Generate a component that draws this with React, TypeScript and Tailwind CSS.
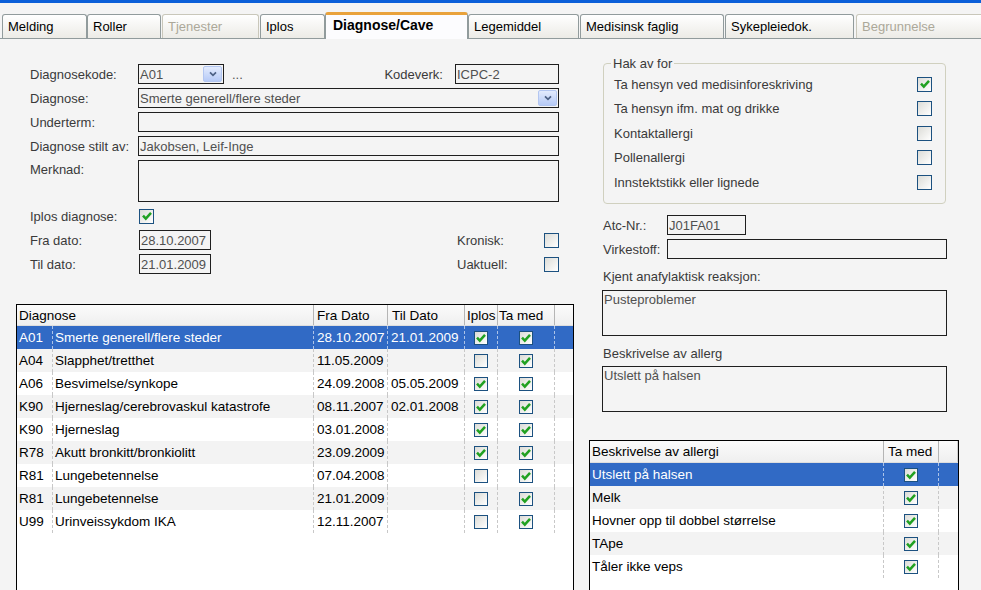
import React from 'react';

type Tab = { label: string; cls: string; active?: boolean; disabled?: boolean };

const tabs: Tab[] = [
  { label: 'Melding', cls: 'ml-[2px] w-[85px]' },
  { label: 'Roller', cls: 'w-[74px]' },
  { label: 'Tjenester', cls: 'ml-[1px] w-[97px]', disabled: true },
  { label: 'Iplos', cls: 'ml-[1px] w-[65px]' },
  { label: 'Diagnose/Cave', cls: 'w-[143px]', active: true },
  { label: 'Legemiddel', cls: 'w-[111px]' },
  { label: 'Medisinsk faglig', cls: 'ml-[1px] w-[144px]' },
  { label: 'Sykepleiedok.', cls: 'ml-[1px] w-[129px]' },
  { label: 'Begrunnelse', cls: 'ml-[2px] w-[140px]', disabled: true },
];

type DiagRow = { code: string; name: string; from: string; to: string; iplos: boolean; med: boolean };

const diagnoses: DiagRow[] = [
  { code: 'A01', name: 'Smerte generell/flere steder', from: '28.10.2007', to: '21.01.2009', iplos: true, med: true },
  { code: 'A04', name: 'Slapphet/tretthet', from: '11.05.2009', to: '', iplos: false, med: true },
  { code: 'A06', name: 'Besvimelse/synkope', from: '24.09.2008', to: '05.05.2009', iplos: true, med: true },
  { code: 'K90', name: 'Hjerneslag/cerebrovaskul katastrofe', from: '08.11.2007', to: '02.01.2008', iplos: true, med: true },
  { code: 'K90', name: 'Hjerneslag', from: '03.01.2008', to: '', iplos: true, med: true },
  { code: 'R78', name: 'Akutt bronkitt/bronkiolitt', from: '23.09.2009', to: '', iplos: true, med: true },
  { code: 'R81', name: 'Lungebetennelse', from: '07.04.2008', to: '', iplos: false, med: true },
  { code: 'R81', name: 'Lungebetennelse', from: '21.01.2009', to: '', iplos: false, med: true },
  { code: 'U99', name: 'Urinveissykdom IKA', from: '12.11.2007', to: '', iplos: false, med: true },
];

const allergies = ['Utslett på halsen', 'Melk', 'Hovner opp til dobbel størrelse', 'TApe', 'Tåler ikke veps'];

const hakAvFor = [
  { label: 'Ta hensyn ved medisinforeskriving', checked: true },
  { label: 'Ta hensyn ifm. mat og drikke', checked: false },
  { label: 'Kontaktallergi', checked: false },
  { label: 'Pollenallergi', checked: false },
  { label: 'Innstektstikk eller lignede', checked: false },
];

const Check = ({ checked, big }: { checked?: boolean; big?: boolean }) => (
  <span
    className={`flex shrink-0 items-center justify-center border border-[#1c5180] bg-linear-to-br from-[#dcdcd7] to-white ${
      big ? 'h-[15px] w-[15px]' : 'h-[14px] w-[14px]'
    }`}
  >
    {checked && (
      <svg viewBox="0 0 12 12" className="h-[12px] w-[12px]">
        <path d="M2 5.6 L4.8 8.6 L10 2.8" fill="none" stroke="#21a121" strokeWidth="2.5" />
      </svg>
    )}
  </span>
);

const DropBtn = () => (
  <span className="flex h-[16px] w-[19px] items-center justify-center rounded-[2px] border border-[#b3c6f1] bg-linear-to-b from-[#e3ebfd] to-[#b6caf6]">
    <svg viewBox="0 0 8 6" className="h-[6px] w-[8px]">
      <path d="M1 1.3 L4 4.3 L7 1.3" fill="none" stroke="#4d6185" strokeWidth="1.7" />
    </svg>
  </span>
);

const Label = ({ children, className = '' }: { children: React.ReactNode; className?: string }) => (
  <span className={`block w-[108px] shrink-0 whitespace-nowrap text-[#3a3a3a] ${className}`}>{children}</span>
);

const Field = ({ className = '', children }: { className?: string; children?: React.ReactNode }) => (
  <div className={`flex shrink-0 overflow-hidden whitespace-nowrap border border-[#1f1f1f] bg-[#f4f4f4] pl-[1px] text-[#505050] ${className}`}>
    {children}
  </div>
);

const DiagnoseTable = () => (
  <div className="ml-[16px] mt-[30px] h-[300px] w-[558px] border border-black bg-white text-[13.5px] text-black">
    <div className="flex h-[21px] border-b border-[#dedede] bg-linear-to-b from-[#fbfbfb] to-[#efefef]">
      <div className="flex w-[297px] items-center border-r border-[#b5b5b5] pl-[2px]">Diagnose</div>
      <div className="flex w-[74px] items-center border-r border-[#b5b5b5] pl-[3px]">Fra Dato</div>
      <div className="flex w-[77px] items-center border-r border-[#b5b5b5] pl-[4px]">Til Dato</div>
      <div className="flex w-[33px] items-center border-r border-[#b5b5b5] pl-[2px]">Iplos</div>
      <div className="flex w-[57px] items-center border-r border-[#b5b5b5] pl-[1px]">Ta med</div>
      <div className="w-[18px]" />
    </div>
    {diagnoses.map((d, i) => {
      const sel = i === 0;
      const line = sel ? 'border-r border-dashed border-white/60' : 'border-r border-dashed border-[#c8c8c8]';
      return (
        <div
          key={i}
          className={`flex h-[23px] ${sel ? 'bg-[#316ac5] text-white' : i % 2 === 1 ? 'bg-[#f3f3f3]' : 'bg-white'}`}
        >
          <div className={`flex w-[36px] items-center pl-[2px] ${line}`}>{d.code}</div>
          <div className={`flex w-[261px] items-center whitespace-nowrap pl-[2px] ${line}`}>{d.name}</div>
          <div className={`flex w-[74px] items-center pl-[3px] ${line}`}>{d.from}</div>
          <div className={`flex w-[77px] items-center pl-[3px] ${line}`}>{d.to}</div>
          <div className={`flex w-[33px] items-center justify-center ${line}`}>
            <Check checked={d.iplos} />
          </div>
          <div className={`flex w-[57px] items-center justify-center ${line}`}>
            <Check checked={d.med} />
          </div>
          <div className="w-[18px]" />
        </div>
      );
    })}
  </div>
);

const AllergyTable = () => (
  <div className="mt-[28px] h-[200px] w-[370px] border border-black bg-white text-[13.5px] text-black">
    <div className="flex h-[22px] border-b border-[#dedede] bg-linear-to-b from-[#fbfbfb] to-[#efefef]">
      <div className="flex w-[294px] items-center border-r border-[#b5b5b5] pl-[2px]">Beskrivelse av allergi</div>
      <div className="flex w-[55px] items-center border-r border-[#b5b5b5] pl-[4px]">Ta med</div>
      <div className="w-[19px] border-r border-[#d0d0d0]" />
    </div>
    {allergies.map((a, i) => {
      const sel = i === 0;
      const line = sel ? 'border-r border-dashed border-white/60' : 'border-r border-dashed border-[#c8c8c8]';
      return (
        <div
          key={i}
          className={`flex h-[23px] ${sel ? 'bg-[#316ac5] text-white' : i % 2 === 1 ? 'bg-[#f3f3f3]' : 'bg-white'}`}
        >
          <div className={`flex w-[294px] items-center whitespace-nowrap pl-[2px] ${line}`}>{a}</div>
          <div className={`flex w-[55px] items-center justify-center ${line}`}>
            <Check checked />
          </div>
          <div className="w-[19px]" />
        </div>
      );
    })}
  </div>
);

export default function App() {
  return (
    <div className="flex h-[590px] w-[981px] flex-col overflow-hidden bg-[#f4f4f4] font-['Liberation_Sans',Arial,sans-serif] text-[13px] leading-[15px]">
      {/* window title bar edge */}
      <div className="h-[3px] w-full shrink-0 bg-[#0b5fd9]" />

      {/* tabs */}
      <div className="flex h-[36px] shrink-0 items-end border-b border-[#919b9c]">
        {tabs.map(t =>
          t.active ? (
            <div
              key={t.label}
              className={`relative -mb-px flex h-[27px] shrink-0 items-center rounded-t-[3px] border border-b-0 border-[#919b9c] border-t-[3px] border-t-[#e9a23b] bg-[#fcfcfe] pb-[3px] pl-[7px] text-[14px] font-bold text-black ${t.cls}`}
            >
              {t.label}
            </div>
          ) : (
            <div
              key={t.label}
              className={`flex h-[24px] shrink-0 items-center rounded-t-[3px] border border-b-0 bg-linear-to-b from-white to-[#ecebe6] pl-[5px] ${
                t.disabled ? 'border-[#c9c7ba] text-[#aca899]' : 'border-[#919b9c] text-black'
              } ${t.cls}`}
            >
              {t.label}
            </div>
          )
        )}
      </div>

      <div className="flex">
        {/* left column */}
        <div className="w-[589px] shrink-0">
          <div className="ml-[30px] w-[529px] pt-[25px]">
            <div className="flex h-[20px] items-center">
              <Label>Diagnosekode:</Label>
              <Field className="h-[20px] w-[86px] items-center justify-between pr-[1px]">
                <span>A01</span>
                <DropBtn />
              </Field>
              <span className="ml-[8px] text-[#555]">...</span>
              <span className="ml-auto mr-[12px] text-[#3a3a3a]">Kodeverk:</span>
              <Field className="h-[20px] w-[104px] items-center">ICPC-2</Field>
            </div>
            <div className="mt-[4px] flex h-[20px] items-center">
              <Label>Diagnose:</Label>
              <Field className="h-[20px] flex-1 items-center justify-between pr-[1px]">
                <span>Smerte generell/flere steder</span>
                <DropBtn />
              </Field>
            </div>
            <div className="mt-[4px] flex h-[20px] items-center">
              <Label>Underterm:</Label>
              <Field className="h-[20px] flex-1" />
            </div>
            <div className="mt-[4px] flex h-[20px] items-center">
              <Label>Diagnose stilt av:</Label>
              <Field className="h-[20px] flex-1 items-center">Jakobsen, Leif-Inge</Field>
            </div>
            <div className="mt-[4px] flex h-[42px] items-start">
              <Label className="pt-[2px]">Merknad:</Label>
              <Field className="h-[42px] flex-1" />
            </div>
            <div className="mt-[4px] flex h-[20px] items-center">
              <Label>Iplos diagnose:</Label>
              <span className="ml-[1px]">
                <Check checked big />
              </span>
            </div>
            <div className="mt-[4px] flex h-[20px] items-center">
              <Label>Fra dato:</Label>
              <Field className="ml-[1px] h-[20px] w-[72px] items-center">28.10.2007</Field>
              <span className="ml-auto w-[87px] text-[#3a3a3a]">Kronisk:</span>
              <Check big />
            </div>
            <div className="mt-[4px] flex h-[20px] items-center">
              <Label>Til dato:</Label>
              <Field className="ml-[1px] h-[20px] w-[72px] items-center">21.01.2009</Field>
              <span className="ml-auto w-[87px] text-[#3a3a3a]">Uaktuell:</span>
              <Check big />
            </div>
          </div>
          <DiagnoseTable />
        </div>

        {/* right column */}
        <div className="w-[392px] shrink-0">
          <fieldset className="ml-[14px] mt-[17px] w-[343px] rounded-[4px] border border-[#d0d0bf]">
            <legend className="ml-[7px] px-[2px] leading-[15px] text-[#3a3a3a]">Hak av for</legend>
            <div className="h-[132px] pl-[10px] pr-[13px] pt-[1px]">
              {hakAvFor.map(h => (
                <div key={h.label} className="flex h-[24.5px] items-center justify-between text-[#3a3a3a]">
                  <span>{h.label}</span>
                  <Check checked={h.checked} big />
                </div>
              ))}
            </div>
          </fieldset>

          <div className="ml-[14px] mt-[11px] flex h-[20px] items-center">
            <span className="w-[64px] shrink-0 text-[#3a3a3a]">Atc-Nr.:</span>
            <Field className="h-[20px] w-[79px] items-center">J01FA01</Field>
          </div>
          <div className="ml-[14px] mt-[4px] flex h-[20px] items-center">
            <span className="w-[64px] shrink-0 text-[#3a3a3a]">Virkestoff:</span>
            <Field className="h-[20px] w-[280px]" />
          </div>
          <div className="ml-[14px] mt-[7px] flex h-[20px] items-center text-[#3a3a3a]">Kjent anafylaktisk reaksjon:</div>
          <Field className="ml-[13px] mt-[4px] h-[46px] w-[345px] pt-[1px]">Pusteproblemer</Field>
          <div className="ml-[14px] mt-[7px] flex h-[20px] items-center text-[#3a3a3a]">Beskrivelse av allerg</div>
          <Field className="ml-[13px] mt-[3px] h-[46px] w-[345px] pt-[1px]">Utslett på halsen</Field>
          <AllergyTable />
        </div>
      </div>
    </div>
  );
}
